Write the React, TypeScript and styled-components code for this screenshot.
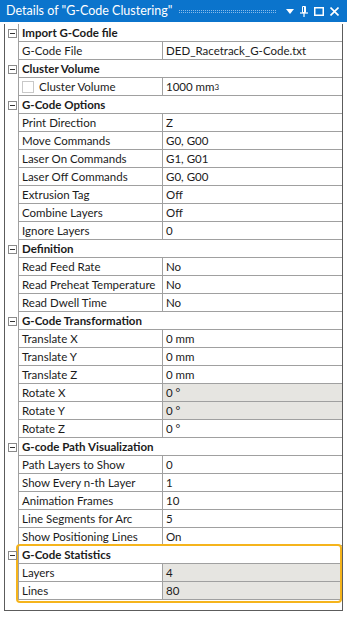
import React from "react";
import styled, { createGlobalStyle } from "styled-components";

const Global = createGlobalStyle`
  html, body { margin: 0; padding: 0; background: #ffffff; }
  body { font-family: Lato, "Noto Sans", sans-serif; font-size: 11.5px; color: #1b1b1b; }
  * { box-sizing: border-box; }
`;

const Window = styled.div`
  width: 347px;
  height: 619px;
  background: #ffffff;
  display: flex;
  flex-direction: column;
`;

const TitleBar = styled.div`
  height: 22px;
  background: #0b74cc;
  color: #ffffff;
  display: flex;
  align-items: center;
  padding: 0 8px 0 6px;
  gap: 7px;
  flex: none;
`;

const TitleText = styled.span`
  font-size: 12.5px;
  white-space: nowrap;
  line-height: 22px;
`;

const Grip = styled.div`
  flex: 1;
  height: 4px;
  margin-top: 1px;
  background-image: radial-gradient(circle at 0.5px 0.5px, rgba(150, 195, 238, 0.9) 0.5px, transparent 0.8px);
  background-size: 2px 2px;
`;

const TitleIcons = styled.div`
  display: flex;
  align-items: center;
  gap: 6px;
  margin-left: 2px;
`;

const Panel = styled.div`
  margin: 2px 4px 0 4px;
  height: 587px;
  border-left: 1px solid #5c5c5c;
  border-right: 1px solid #5c5c5c;
  border-bottom: 1px solid #5c5c5c;
  display: flex;
  flex-direction: column;
`;

const Section = styled.div`
  position: relative;
`;

const Highlight = styled.div`
  position: absolute;
  left: 11px;
  right: 0px;
  top: -2px;
  bottom: -3px;
  border: 2px solid #f5b41c;
  border-radius: 4px;
  pointer-events: none;
`;

const Row = styled.div`
  display: grid;
  grid-template-columns: 13px 1px 143px 1px 1fr;
  height: 18px;
`;

const Gutter = styled.div`
  display: flex;
  align-items: center;
  justify-content: center;
  padding-left: 1px;
`;

const VLine = styled.div`
  background: #a0a0a0;
`;

const Cell = styled.div<{ $gray?: boolean }>`
  border-bottom: 1px solid #a0a0a0;
  background: ${(p) => (p.$gray ? "#e6e5e1" : "#ffffff")};
  display: flex;
  align-items: center;
  padding-left: 3px;
  white-space: nowrap;
  overflow: hidden;
  line-height: 17px;
`;

const HeaderCell = styled.div`
  grid-column: 3 / 6;
  border-bottom: 1px solid #a0a0a0;
  display: flex;
  align-items: center;
  padding-left: 3px;
  font-weight: 700;
  white-space: nowrap;
`;

const Collapse = styled.div`
  width: 9px;
  height: 9px;
  border: 1px solid #8a8a8a;
  position: relative;
  &::after {
    content: "";
    position: absolute;
    left: 1px;
    right: 1px;
    top: 3px;
    height: 1px;
    background: #333;
  }
`;

const CheckBox = styled.span`
  display: inline-block;
  flex: none;
  width: 12px;
  height: 12px;
  border: 1px solid #c8c8c8;
  background: #fff;
  margin-right: 5px;
`;

const Sup = styled.sup`
  font-size: 8px;
  line-height: 0;
  vertical-align: 5px;
`;

type R = { name: string; value: React.ReactNode; gray?: boolean; check?: boolean };
type S = { title: string; rows: R[]; highlight?: boolean };

const sections: S[] = [
  { title: "Import G-Code file", rows: [{ name: "G-Code File", value: "DED_Racetrack_G-Code.txt" }] },
  {
    title: "Cluster Volume",
    rows: [{ name: "Cluster Volume", value: <>1000 mm<Sup>3</Sup></>, check: true }],
  },
  {
    title: "G-Code Options",
    rows: [
      { name: "Print Direction", value: "Z" },
      { name: "Move Commands", value: "G0, G00" },
      { name: "Laser On Commands", value: "G1, G01" },
      { name: "Laser Off Commands", value: "G0, G00" },
      { name: "Extrusion Tag", value: "Off" },
      { name: "Combine Layers", value: "Off" },
      { name: "Ignore Layers", value: "0" },
    ],
  },
  {
    title: "Definition",
    rows: [
      { name: "Read Feed Rate", value: "No" },
      { name: "Read Preheat Temperature", value: "No" },
      { name: "Read Dwell Time", value: "No" },
    ],
  },
  {
    title: "G-Code Transformation",
    rows: [
      { name: "Translate X", value: "0 mm" },
      { name: "Translate Y", value: "0 mm" },
      { name: "Translate Z", value: "0 mm" },
      { name: "Rotate X", value: "0 °", gray: true },
      { name: "Rotate Y", value: "0 °", gray: true },
      { name: "Rotate Z", value: "0 °" },
    ],
  },
  {
    title: "G-code Path Visualization",
    rows: [
      { name: "Path Layers to Show", value: "0" },
      { name: "Show Every n-th Layer", value: "1" },
      { name: "Animation Frames", value: "10" },
      { name: "Line Segments for Arc", value: "5" },
      { name: "Show Positioning Lines", value: "On" },
    ],
  },
  {
    title: "G-Code Statistics",
    highlight: true,
    rows: [
      { name: "Layers", value: "4", gray: true },
      { name: "Lines", value: "80", gray: true },
    ],
  },
];

const DropIcon = () => (
  <svg width="8" height="5" viewBox="0 0 8 5">
    <path d="M0 0 H8 L4 5 Z" fill="#fff" />
  </svg>
);
const PinIcon = () => (
  <svg width="8" height="11" viewBox="0 0 8 11">
    <path d="M2.5 0.5 H5.5 V6.5 H2.5 Z" fill="none" stroke="#fff" strokeWidth="1" />
    <path d="M4.5 1 V6" stroke="#fff" strokeWidth="1" />
    <path d="M0 7 H8" stroke="#fff" strokeWidth="1.2" />
    <path d="M4 7 V11" stroke="#fff" strokeWidth="1.2" />
  </svg>
);
const MaxIcon = () => (
  <svg width="10" height="9" viewBox="0 0 10 9">
    <rect x="0.75" y="0.75" width="8.5" height="7.5" fill="none" stroke="#fff" strokeWidth="1.5" />
  </svg>
);
const CloseIcon = () => (
  <svg width="9" height="9" viewBox="0 0 9 9">
    <path d="M0.5 0.5 L8.5 8.5 M8.5 0.5 L0.5 8.5" stroke="#fff" strokeWidth="1.6" />
  </svg>
);

export default function App() {
  return (
    <>
      <Global />
      <Window>
        <TitleBar>
          <TitleText>Details of "G-Code Clustering"</TitleText>
          <Grip />
          <TitleIcons>
            <DropIcon />
            <PinIcon />
            <MaxIcon />
            <CloseIcon />
          </TitleIcons>
        </TitleBar>
        <Panel>
          {sections.map((s) => (
            <Section key={s.title}>
              {s.highlight && <Highlight />}
              <Row>
                <Gutter>
                  <Collapse />
                </Gutter>
                <VLine />
                <HeaderCell>{s.title}</HeaderCell>
              </Row>
              {s.rows.map((r) => (
                <Row key={r.name}>
                  <Gutter />
                  <VLine />
                  <Cell>
                    {r.check && <CheckBox />}
                    {r.name}
                  </Cell>
                  <VLine />
                  <Cell $gray={r.gray}>{r.value}</Cell>
                </Row>
              ))}
            </Section>
          ))}
        </Panel>
      </Window>
    </>
  );
}
